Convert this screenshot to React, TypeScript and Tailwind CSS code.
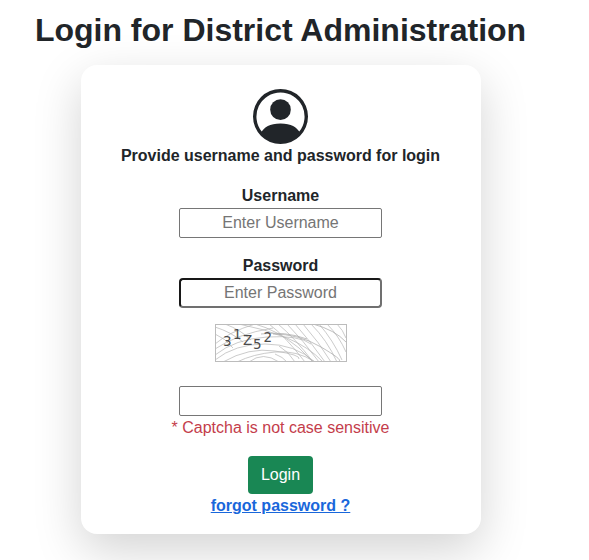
import type { ReactNode } from "react";

function PersonCircle() {
  return (
    <svg viewBox="0 0 16 16" className="block h-[55px] w-[55px]" fill="currentColor">
      <path d="M11 6a3 3 0 1 1-6 0 3 3 0 0 1 6 0" />
      <path
        fillRule="evenodd"
        d="M0 8a8 8 0 1 1 16 0A8 8 0 0 1 0 8m8-7a7 7 0 0 0-5.468 11.37C3.242 11.226 4.805 10 8 10s4.757 1.225 5.468 2.37A7 7 0 0 0 8 1"
      />
    </svg>
  );
}

function Captcha() {
  return (
    <svg viewBox="0 0 132 38" className="mt-4 block h-[38px] w-[132px]">
      <rect x="0.5" y="0.5" width="131" height="37" fill="#fff" />
      <g fill="none" stroke="#b4b4b4" strokeWidth="0.7">
        <path d="M0 20Q14 8 40 0M0 25Q22 10 58 4M0 31Q20 15 52 13T96 20" />
        <path d="M0 36Q20 20 50 20T100 38M8 38Q34 23 60 27T84 35" />
        <path d="M22 38Q38 30 60 28T100 38M34 38Q48 27 64 38" />
        <path d="M0 3Q16 8 28 18M0 10Q10 14 18 24M10 0Q26 6 36 16" />
        <path d="M24 0Q50 5 72 14T108 38M40 0Q62 6 84 24L98 38" />
        <path d="M54 0Q70 12 90 38M63 0Q80 14 98 38M72 0Q88 16 104 38" />
        <path d="M80 0Q96 18 110 38M88 0Q104 18 116 38M96 0Q112 16 122 38" />
        <path d="M104 0Q118 16 127 36M112 0Q124 12 131 28M122 0Q128 6 131 14" />
        <path d="M64 22Q74 28 80 38M60 30Q68 33 72 38" />
        <path stroke="#a6a6a6" d="M58 10Q84 10 106 23T124 37M98 0Q120 6 131 18M46 10Q70 7 92 15" />
      </g>
      <rect x="0.5" y="0.5" width="131" height="37" fill="none" stroke="#bcbcbc" />
      <g className="font-['DejaVu_Sans',sans-serif] text-[13.5px]" fill="#4b4b4b">
        <text x="8" y="21.5">3</text>
        <text x="18" y="15">1</text>
        <text x="28" y="21">Z</text>
        <text x="38" y="25">5</text>
        <text x="48.5" y="18">2</text>
      </g>
    </svg>
  );
}

function Label({ children }: { children: ReactNode }) {
  return <label className="block h-6 font-bold">{children}</label>;
}

const inputBase =
  "block h-[30px] w-[203px] bg-white px-0.5 text-center outline-none placeholder:text-[#757575]";

export default function App() {
  return (
    <main className="h-[560px] overflow-hidden bg-white font-['Liberation_Sans',Arial,sans-serif] text-base leading-6 text-[#212529]">
      <div className="flex w-[561px] flex-col items-center">
        <h1 className="h-[65px] pt-[11px] text-[32px] leading-[38px] font-bold whitespace-nowrap">
          Login for District Administration
        </h1>
        <form className="flex h-[469px] w-[400px] flex-col items-center rounded-2xl bg-white pt-6 shadow-[0_16px_48px_rgba(0,0,0,0.175)]">
          <PersonCircle />
          <p className="font-bold">Provide username and password for login</p>
          <div className="mt-4 flex flex-col items-center">
            <Label>Username</Label>
            <input
              placeholder="Enter Username"
              className={`${inputBase} rounded-[2px] border border-[#767676]`}
            />
          </div>
          <div className="mt-4 flex flex-col items-center">
            <Label>Password</Label>
            <input
              type="password"
              placeholder="Enter Password"
              className={`${inputBase} rounded-[4px] border-2 border-t-[#181818] border-r-[#707070] border-b-[#707070] border-l-[#181818]`}
            />
          </div>
          <Captcha />
          <input
            className={`${inputBase} mt-6 rounded-[2px] border border-[#767676]`}
          />
          <p className="text-[#c43d4b]">* Captcha is not case sensitive</p>
          <button
            type="button"
            className="mt-4 h-[38px] w-[65px] rounded-[4px] bg-[#198754] text-white"
          >
            Login
          </button>
          <a href="#" className="font-bold text-[#1967db] underline">
            forgot password ?
          </a>
        </form>
      </div>
    </main>
  );
}
